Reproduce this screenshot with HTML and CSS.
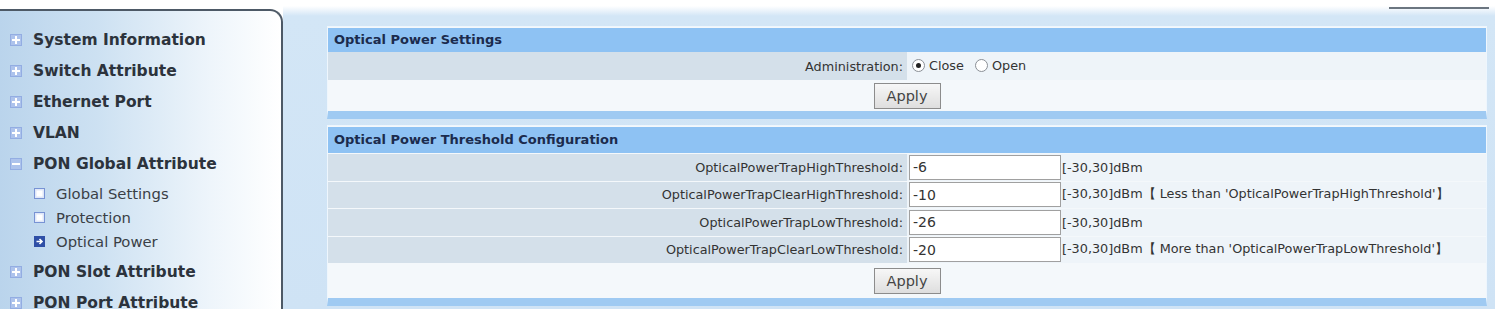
FILE: index.html
```html
<!DOCTYPE html>
<html lang="en">
<head>
    <meta charset="UTF-8">
    <title>Optical Power</title>
    <link rel="stylesheet" href="styles.css">
</head>
<body>
    <div class="sidebar">
        <ul class="menu">
            <li class="menu-item"><svg class="ico" viewBox="0 0 12 12"><rect x="0" y="0" width="12" height="12" fill="#93ade2"/><rect x="1" y="1" width="10" height="10" fill="#adc3ec"/><rect x="5" y="2" width="2" height="8" fill="#fff"/><rect x="2" y="5" width="8" height="2" fill="#fff"/></svg>System Information</li>
            <li class="menu-item"><svg class="ico" viewBox="0 0 12 12"><rect x="0" y="0" width="12" height="12" fill="#93ade2"/><rect x="1" y="1" width="10" height="10" fill="#adc3ec"/><rect x="5" y="2" width="2" height="8" fill="#fff"/><rect x="2" y="5" width="8" height="2" fill="#fff"/></svg>Switch Attribute</li>
            <li class="menu-item"><svg class="ico" viewBox="0 0 12 12"><rect x="0" y="0" width="12" height="12" fill="#93ade2"/><rect x="1" y="1" width="10" height="10" fill="#adc3ec"/><rect x="5" y="2" width="2" height="8" fill="#fff"/><rect x="2" y="5" width="8" height="2" fill="#fff"/></svg>Ethernet Port</li>
            <li class="menu-item"><svg class="ico" viewBox="0 0 12 12"><rect x="0" y="0" width="12" height="12" fill="#93ade2"/><rect x="1" y="1" width="10" height="10" fill="#adc3ec"/><rect x="5" y="2" width="2" height="8" fill="#fff"/><rect x="2" y="5" width="8" height="2" fill="#fff"/></svg>VLAN</li>
            <li class="menu-item"><svg class="ico" viewBox="0 0 12 12"><rect x="0" y="0" width="12" height="12" fill="#93ade2"/><rect x="1" y="1" width="10" height="10" fill="#adc3ec"/><rect x="2" y="5" width="8" height="2" fill="#fff"/></svg>PON Global Attribute</li>
            <li>
                <ul class="submenu">
                    <li class="sub-item"><svg class="sub-ico" viewBox="0 0 11 11"><rect x="0.5" y="0.5" width="10" height="10" fill="#dfe7f8" stroke="#7893d4"/><rect x="2.5" y="2.5" width="6" height="6" fill="#fff"/></svg>Global Settings</li>
                    <li class="sub-item"><svg class="sub-ico" viewBox="0 0 11 11"><rect x="0.5" y="0.5" width="10" height="10" fill="#dfe7f8" stroke="#7893d4"/><rect x="2.5" y="2.5" width="6" height="6" fill="#fff"/></svg>Protection</li>
                    <li class="sub-item"><svg class="sub-ico" viewBox="0 0 11 11"><rect x="0" y="0" width="11" height="11" fill="#2f4fa6"/><path d="M2.5 5.5h5M5.5 3l2.5 2.5-2.5 2.5" fill="none" stroke="#fff" stroke-width="1.6"/></svg>Optical Power</li>
                </ul>
            </li>
            <li class="menu-item"><svg class="ico" viewBox="0 0 12 12"><rect x="0" y="0" width="12" height="12" fill="#93ade2"/><rect x="1" y="1" width="10" height="10" fill="#adc3ec"/><rect x="5" y="2" width="2" height="8" fill="#fff"/><rect x="2" y="5" width="8" height="2" fill="#fff"/></svg>PON Slot Attribute</li>
            <li class="menu-item"><svg class="ico" viewBox="0 0 12 12"><rect x="0" y="0" width="12" height="12" fill="#93ade2"/><rect x="1" y="1" width="10" height="10" fill="#adc3ec"/><rect x="5" y="2" width="2" height="8" fill="#fff"/><rect x="2" y="5" width="8" height="2" fill="#fff"/></svg>PON Port Attribute</li>
        </ul>
    </div>

    <div class="main">
        <div class="tab-line"></div>

        <div class="panel">
            <div class="panel-title">Optical Power Settings</div>
            <table class="form-table">
                <tr>
                    <td class="label">Administration:</td>
                    <td class="value">
                        <label class="radio"><span class="dot checked"></span>Close</label>
                        <label class="radio"><span class="dot"></span>Open</label>
                    </td>
                </tr>
                <tr class="apply-row">
                    <td colspan="2"><button class="apply">Apply</button></td>
                </tr>
            </table>
        </div>

        <div class="panel">
            <div class="panel-title tall">Optical Power Threshold Configuration</div>
            <table class="form-table">
                <tr class="field">
                    <td class="label">OpticalPowerTrapHighThreshold:</td>
                    <td class="value"><input class="num" type="text" value="-6"><span class="hint">[-30,30]dBm</span></td>
                </tr>
                <tr class="field">
                    <td class="label">OpticalPowerTrapClearHighThreshold:</td>
                    <td class="value"><input class="num" type="text" value="-10"><span class="hint">[-30,30]dBm【 Less than 'OpticalPowerTrapHighThreshold'】</span></td>
                </tr>
                <tr class="field">
                    <td class="label">OpticalPowerTrapLowThreshold:</td>
                    <td class="value"><input class="num" type="text" value="-26"><span class="hint">[-30,30]dBm</span></td>
                </tr>
                <tr class="field">
                    <td class="label">OpticalPowerTrapClearLowThreshold:</td>
                    <td class="value"><input class="num" type="text" value="-20"><span class="hint">[-30,30]dBm【 More than 'OpticalPowerTrapLowThreshold'】</span></td>
                </tr>
                <tr class="apply-row tall">
                    <td colspan="2"><button class="apply">Apply</button></td>
                </tr>
            </table>
        </div>
    </div>
</body>
</html>
```

FILE: styles.css
```css
html, body {
    height: 100%;
}

body {
    margin: 0;
    display: flex;
    overflow: hidden;
    background: #fff;
    font-family: "DejaVu Sans", Verdana, sans-serif;
}

.sidebar {
    width: 281px;
    flex: none;
    margin-top: 9px;
    border-top: 2px solid #4d5966;
    border-right: 2px solid #4d5966;
    border-top-right-radius: 13px;
    background: linear-gradient(to right, #bad4ec 0%, #cde1f2 35%, #eef5fb 75%, #ffffff 100%);
}

.menu {
    list-style: none;
    margin: 0;
    padding: 13px 0 0 0;
}

.menu-item {
    height: 31px;
    display: flex;
    align-items: center;
    padding-left: 10px;
    font-size: 15.5px;
    font-weight: bold;
    color: #2c333c;
}

.ico {
    width: 12px;
    height: 12px;
    margin-right: 11px;
}

.submenu {
    list-style: none;
    margin: 2px 0 3px 0;
    padding: 0;
}

.sub-item {
    height: 24px;
    display: flex;
    align-items: center;
    padding-left: 34px;
    font-size: 14.8px;
    color: #3a3f46;
}

.sub-ico {
    width: 11px;
    height: 11px;
    margin-right: 11px;
}

.main {
    flex: 1;
    position: relative;
    padding: 26px 8px 0 44px;
    background: linear-gradient(to bottom, #ffffff 0, #ffffff 6px, #d3e6f6 16px, #cfe3f5 100%);
}

.tab-line {
    position: absolute;
    top: 7px;
    right: 6px;
    width: 100px;
    height: 2px;
    background: #6b7580;
}

.panel {
    border: 1px solid #eef6fd;
    border-bottom: 8px solid #9fcaf2;
    margin-bottom: 6px;
    background: #f4f8fb;
}

.panel-title {
    height: 24px;
    line-height: 24px;
    margin-top: 1px;
    padding-left: 6px;
    background: #8ec2f3;
    font-size: 13px;
    font-weight: bold;
    color: #1b2b4d;
}

.panel-title.tall {
    height: 26px;
    line-height: 26px;
}

.form-table {
    width: 100%;
    border-collapse: collapse;
    font-size: 12.8px;
    color: #333;
}

.form-table td {
    padding: 0;
}

.label {
    width: 50%;
    text-align: right;
    padding-right: 4px !important;
    background: #d4e0ea;
    height: 28px;
}

.value {
    background: #eef4f9;
    padding-left: 2px !important;
}

.field td {
    height: 26.5px;
    border-top: 1px solid #f4f8fb;
}

.radio {
    display: inline-flex;
    align-items: center;
    margin-right: 4px;
}

.dot {
    width: 13px;
    height: 13px;
    box-sizing: border-box;
    border: 1px solid #8a8f96;
    border-radius: 50%;
    background: #fff;
    margin: 0 4px 0 3px;
    position: relative;
}

.dot.checked::after {
    content: "";
    position: absolute;
    left: 3px;
    top: 3px;
    width: 5px;
    height: 5px;
    border-radius: 50%;
    background: #222;
}

.apply-row td {
    height: 31px;
    text-align: center;
    background: #f4f8fb;
}

.apply-row.tall td {
    height: 35px;
}

.apply {
    width: 67px;
    height: 26px;
    border: 1px solid #8c8c8c;
    background: linear-gradient(to bottom, #f7f7f7, #dedede);
    font-family: "DejaVu Sans", Verdana, sans-serif;
    font-size: 14.5px;
    color: #444;
    padding: 0;
}

.num {
    width: 152px;
    height: 25px;
    box-sizing: border-box;
    border: 1px solid #a0a0a0;
    padding: 0 3px;
    font-family: "DejaVu Sans", Verdana, sans-serif;
    font-size: 14px;
    color: #333;
    vertical-align: middle;
    margin: 0;
}

.hint {
    margin-left: 1px;
    vertical-align: middle;
}
```
